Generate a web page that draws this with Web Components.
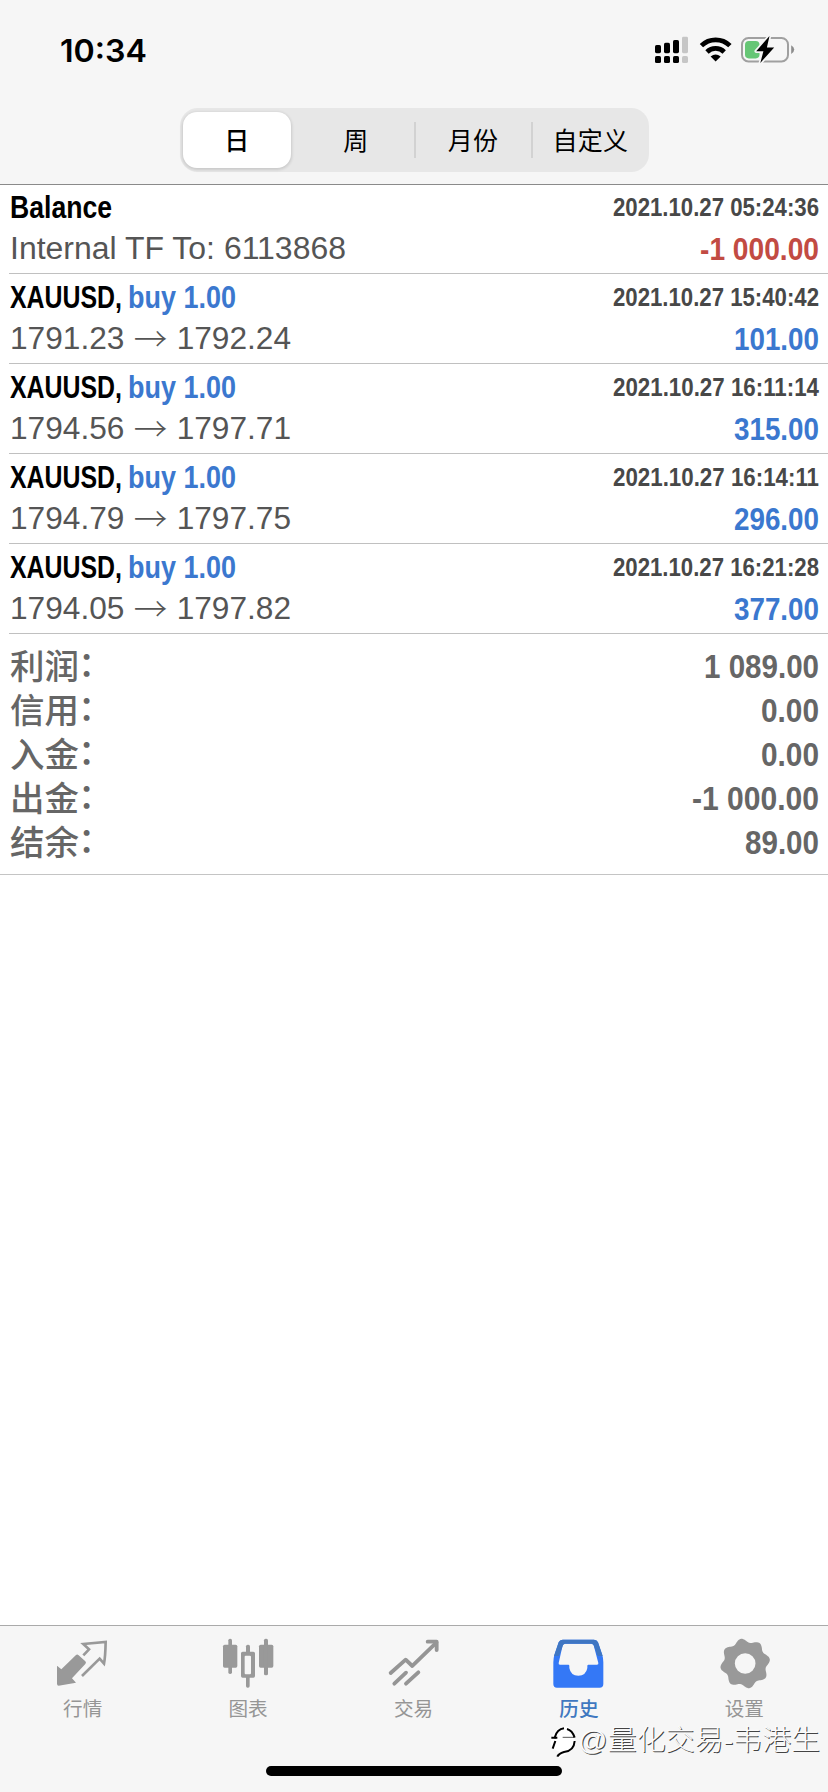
<!DOCTYPE html>
<html lang="zh-CN">
<head>
<meta charset="utf-8">
<title>历史</title>
<style>
html,body{margin:0;height:100%;background:#fff}
</style>
</head>
<body>
<trade-app></trade-app>
<script>
const LATIN = '"Liberation Sans",Arial,"Noto Sans CJK SC",sans-serif';
const CJK = '"Noto Sans CJK SC",sans-serif';

function define(name, html, setup) {
  const tpl = document.createElement('template');
  tpl.innerHTML = html;
  customElements.define(name, class extends HTMLElement {
    connectedCallback() {
      if (this.shadowRoot) return;
      this.attachShadow({ mode: 'open' }).append(tpl.content.cloneNode(true));
      if (setup) setup(this, this.shadowRoot);
    }
  });
}

/* One line of text condensed or expanded to the width in its w attribute. */
define('fit-text', `<style>
:host{display:inline-block;white-space:nowrap;flex:none}
span{display:inline-block;transform-origin:0 50%}
</style><span><slot></slot></span>`, (el, root) => {
  const w = +el.getAttribute('w');
  const span = root.querySelector('span');
  const natural = span.getBoundingClientRect().width;
  el.style.width = w + 'px';
  span.style.transform = `scaleX(${w / natural})`;
});

define('status-bar', `<style>
:host{display:flex;justify-content:space-between;align-items:flex-start;height:108px;box-sizing:border-box;padding:31px 30px 0 60px}
.time{font:600 31px/39px Inter,sans-serif;color:#000}
svg{display:block;margin-top:1px}
</style>
<fit-text class="time" w="87">10:34</fit-text>
<svg width="144" height="36" viewBox="654 32 144 36">
<g fill="#000"><rect x="655" y="45" width="6" height="8.2" rx="1.6"/><rect x="664" y="42.8" width="6" height="10.4" rx="1.6"/><rect x="673" y="40" width="6" height="13.2" rx="1.6"/><rect x="655" y="56" width="6" height="7" rx="1.6"/><rect x="664" y="56" width="6" height="7" rx="1.6"/><rect x="673" y="56" width="6" height="7" rx="1.6"/></g>
<g fill="#c6c6c6"><rect x="682" y="36.8" width="6" height="16.4" rx="1.4"/><rect x="682" y="56" width="6" height="7" rx="1.6"/></g>
<g fill="none" stroke="#000" stroke-width="4.8"><path d="M701.4 45.6a20.4 20.4 0 0 1 28.5 0"/><path d="M707 51.9a12.4 12.4 0 0 1 17.2 0"/></g>
<path d="M710.6 56.4q5-3.8 10.1 0l-5.05 5.2z"/>
<rect x="742" y="38" width="46" height="23.4" rx="6.5" fill="none" stroke="#a0a0a0" stroke-width="2"/>
<path d="M791.2 45.2q3 1.6 3 4.4t-3 4.4z" fill="#8d8d8d"/>
<rect x="745" y="41" width="14.5" height="17.4" rx="3.8" fill="#66c675"/>
<path d="M769.5 36 756.2 51.2h7.2L760.3 63 774.2 47.4h-7.3z" fill="#000" stroke="#f6f6f6" stroke-width="3.4" paint-order="stroke" stroke-linejoin="round"/>
</svg>`);

define('segment-item', `<style>
:host{display:flex;flex:1;align-items:center;justify-content:center;position:relative;font:400 25px/55px ${CJK};color:#000;letter-spacing:.3px}
:host([sep])::before{content:"";position:absolute;left:-1px;top:10px;height:36px;width:2px;background:#d2d2d2}
:host([active]){justify-content:flex-start;font-weight:500}
:host([active]) div{margin-left:3px;background:#fff;border-radius:14px;box-shadow:0 1px 3px 1px rgba(0,0,0,.13)}
div{width:108px;height:56px;text-align:center}
</style><div><slot></slot></div>`);

define('segment-bar', `<style>
:host{display:flex;width:469px;height:64px;box-sizing:border-box;padding:4px 0;margin-left:180px;background:#e7e7e7;border-radius:18px}
</style><segment-item active>日</segment-item><segment-item>周</segment-item><segment-item sep>月份</segment-item><segment-item sep>自定义</segment-item>`);

define('trade-row', `<style>
:host{display:flex;justify-content:space-between;height:90px;box-sizing:border-box;margin-left:9px;padding:3px 9px 0 1px;border-bottom:1px solid #c0c0c0;font-family:${LATIN}}
:host([first]){height:89px;padding-top:2px}
.l,.r{display:flex;flex-direction:column}
.r{align-items:flex-end}
.t{height:40px;font:700 31px/42px ${LATIN};color:#000;display:flex}
.p{font-size:31px;line-height:43px;height:43px;color:#555}
.p i{font:300 33px/40px ${CJK};display:inline-block;height:43px;vertical-align:top;width:34px;text-align:center}
.d{font-weight:700;font-size:25px;line-height:40px;height:40px;color:#484848}
.a{font-weight:700;font-size:31px;line-height:45px;height:45px;color:#3b78cf}
.a.neg{color:#c24b43}
.buy{color:#3b78cf;margin-left:6px}
</style><div class="l"><div class="t"></div><div class="p"></div></div><div class="r"></div>`, (el, root) => {
  const a = n => el.getAttribute(n);
  const title = a('side')
    ? `<fit-text w="112">${a('name')},</fit-text><fit-text class="buy" w="108">${a('side')}</fit-text>`
    : `<fit-text w="102">${a('name')}</fit-text>`;
  const info = a('from')
    ? `<fit-text w="281">${a('from')} <i>→</i> ${a('to')}</fit-text>`
    : `<fit-text w="336">${a('note')}</fit-text>`;
  root.querySelector('.t').innerHTML = title;
  root.querySelector('.p').innerHTML = info;
  const v = a('amount');
  root.querySelector('.r').innerHTML =
    `<fit-text class="d" w="206">${a('date')}</fit-text><fit-text class="a ${v[0] === '-' ? 'neg' : ''}" w="${a('aw')}">${v}</fit-text>`;
});

define('sum-row', `<style>
:host{display:flex;justify-content:space-between;height:44px;padding:0 9px 0 10px}
.k{font:500 34.5px/50px ${LATIN};color:#666;height:44px;display:flex}
.c{margin:-3px 0 0 -1px}
.v{font:700 33px/50px ${LATIN};color:#666;height:44px}
</style><div class="k"><span class="n"></span><span class="c">：</span></div>`, (el, root) => {
  root.querySelector('.n').textContent = el.getAttribute('label');
  root.lastElementChild.insertAdjacentHTML('afterend',
    `<fit-text class="v" w="${el.getAttribute('w')}">${el.getAttribute('value')}</fit-text>`);
});

function gear(cx, cy) {
  let d = '';
  for (let i = 0; i < 160; i++) {
    const t = i / 160 * Math.PI * 2;
    const r = 69 + 6 * Math.cos(8 * (t + 10 * Math.PI / 180));
    d += (i ? 'L' : 'M') + (cx + r * Math.cos(t)).toFixed(1) + ' ' + (cy + r * Math.sin(t)).toFixed(1);
  }
  return d + `ZM${cx - 31} ${cy}a31 31 0 1 0 62 0a31 31 0 1 0-62 0Z`;
}

const ICONS = {
  quotes: ['168 82', `<path fill="#999" d="M171 168 184 179 228 136q4-3 8 1l20 18q4 4 0 8L216 206l12 13-52 9q-5 0-5-6z"/><path fill="none" stroke="#999" stroke-width="8" d="M246 199 299 147 312 162q4-20 5-65L250 103 267 119 250 137"/>`],
  chart: ['663 82', `<g fill="#999"><rect x="669" y="105" width="43" height="69" rx="5"/><rect x="685" y="87" width="11" height="106" rx="5"/><rect x="777" y="105" width="43" height="69" rx="5"/><rect x="792" y="87" width="12" height="110" rx="5"/><path fill-rule="evenodd" d="M728 126h32q5 0 5 5v68q0 5-5 5h-32q-5 0-5-5v-68q0-5 5-5m9 12q-3 0-3 3v49q0 4 3 4h13q3 0 3-4v-49q0-3-3-3z"/><rect x="738" y="105" width="12" height="27" rx="5"/><rect x="738" y="198" width="11" height="36" rx="5"/></g>`],
  trade: ['259 82', `<g fill="none" stroke="#959595" stroke-width="11.5" stroke-linecap="round" stroke-linejoin="round"><path d="M270 190 315 150 335 169 407 99"/><path d="M281 222 316 189M316 222 353 188"/><path d="M381 96H408V121"/></g>`],
  history: ['71 82', `<path fill="#3478f6" fill-rule="evenodd" d="M103 90h94q9 0 12 8l13 38q3 10 3 22v65q0 11-11 11H86q-11 0-11-11v-65q0-12 3-22l13-38q3-8 12-8m7 12q-5 0-7 5L91 160q-1 5 4 5h25q3 0 3 4v6q4 23 27 23t27-23v-6q0-4 3-4h26q5 0 4-5L196 107q-2-5-7-5z"/><path d="M103 90h94q9 0 12 8l14 41h-15l-12-32q-2-5-7-5h-78q-5 0-7 5L92 139H77l14-41q3-8 12-8" fill="#3f76c2"/>`],
  settings: ['566 82', `<path fill="#999" fill-rule="evenodd" d="${gear(647.5, 161.5)}"/>`]
};

define('tab-item', `<style>
:host{flex:1;display:flex;flex-direction:column;align-items:center;color:#959595}
:host([active]){color:#4078c0}
svg{display:block;width:53.33px;height:53.33px;margin-top:11.33px}
span{font:400 19.6px/28px ${CJK};margin-top:3px}
:host([active]) span{font-weight:500}
</style><svg></svg><span><slot></slot></span>`, (el, root) => {
  const [o, body] = ICONS[el.getAttribute('icon')];
  const s = root.querySelector('svg');
  s.setAttribute('viewBox', o + ' 160 160');
  s.innerHTML = body;
});

define('water-mark', `<style>
:host{position:absolute;left:548px;top:95px;width:276px;height:42px;display:flex;align-items:center}
svg{display:block;flex:none}
fit-text{font:300 28px/34px ${LATIN};color:#fbfbfb;text-shadow:1px 1px 0 #444;margin:-2px 0 0 0}
</style><svg width="30" height="42" viewBox="0 0 90 126">
<path fill="#fff" d="M12 45Q30 14 60 17Q84 28 80 66Q70 95 30 112L36 93 12 82Q4 66 12 45"/>
<g fill="none" stroke="#000" stroke-width="6"><path d="M10 50H20Q27 24 48 22M57 24Q73 28 80 50M80 60Q78 90 48 93 32 98 28 107"/><path d="M22 60 14 83M20 50H28"/><path stroke-width="2" d="M44 49H78"/></g></svg>
<fit-text w="242">@量化交易-韦港生</fit-text>`);

define('tab-bar', `<style>
:host{display:block;position:relative;height:167px;box-sizing:border-box;border-top:1px solid #aaa;background:#f6f6f6}
nav{display:flex;height:140px;padding-right:1px}
.home{width:296px;height:10px;border-radius:5px;background:#000;margin:0 auto}
</style><nav><tab-item icon="quotes">行情</tab-item><tab-item icon="chart">图表</tab-item><tab-item icon="trade">交易</tab-item><tab-item icon="history" active>历史</tab-item><tab-item icon="settings">设置</tab-item></nav><div class="home"></div><water-mark></water-mark>`);

define('trade-app', `<style>
:host{display:flex;flex-direction:column;width:828px;height:1792px;background:#fff;overflow:hidden}
header{height:185px;box-sizing:border-box;border-bottom:1px solid #8a8a8a;background:#f6f6f6;flex:none}
main{flex:1}
.sum{padding:8px 0 12px;height:241px;box-sizing:border-box;border-bottom:1px solid #c4c4c4}
</style>
<header><status-bar></status-bar><segment-bar></segment-bar></header>
<main>
<trade-row first name="Balance" note="Internal TF To: 6113868" date="2021.10.27 05:24:36" amount="-1 000.00" aw="119"></trade-row>
<trade-row name="XAUUSD" side="buy 1.00" from="1791.23" to="1792.24" date="2021.10.27 15:40:42" amount="101.00" aw="85"></trade-row>
<trade-row name="XAUUSD" side="buy 1.00" from="1794.56" to="1797.71" date="2021.10.27 16:11:14" amount="315.00" aw="85"></trade-row>
<trade-row name="XAUUSD" side="buy 1.00" from="1794.79" to="1797.75" date="2021.10.27 16:14:11" amount="296.00" aw="85"></trade-row>
<trade-row name="XAUUSD" side="buy 1.00" from="1794.05" to="1797.82" date="2021.10.27 16:21:28" amount="377.00" aw="85"></trade-row>
<div class="sum">
<sum-row label="利润" value="1 089.00" w="115"></sum-row>
<sum-row label="信用" value="0.00" w="58"></sum-row>
<sum-row label="入金" value="0.00" w="58"></sum-row>
<sum-row label="出金" value="-1 000.00" w="127"></sum-row>
<sum-row label="结余" value="89.00" w="74"></sum-row>
</div>
</main>
<tab-bar></tab-bar>`);
</script>
</body>
</html>
